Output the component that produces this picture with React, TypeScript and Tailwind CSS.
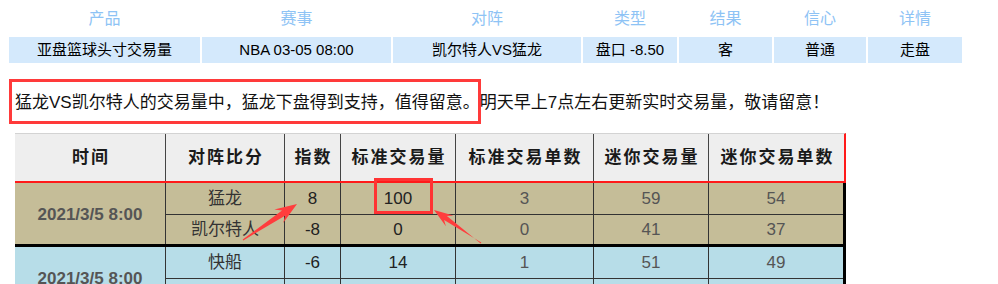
import React from 'react';

const topHeads = ['产品', '赛事', '对阵', '类型', '结果', '信心', '详情'];
const topVals = ['亚盘篮球头寸交易量', 'NBA 03-05 08:00', '凯尔特人VS猛龙', '盘口 -8.50', '客', '普通', '走盘'];

const sheetHeads = ['时间', '对阵比分', '指数', '标准交易量', '标准交易单数', '迷你交易量', '迷你交易单数'];

type Row = { name: string; idx: string; std: string; stdN: string; mini: string; miniN: string };

const groups: { time: string; bg: string; rows: Row[] }[] = [
  {
    time: '2021/3/5 8:00',
    bg: 'bg-[#c5bd98]',
    rows: [
      { name: '猛龙', idx: '8', std: '100', stdN: '3', mini: '59', miniN: '54' },
      { name: '凯尔特人', idx: '-8', std: '0', stdN: '0', mini: '41', miniN: '37' },
    ],
  },
  {
    time: '2021/3/5 8:00',
    bg: 'bg-[#b7dde8]',
    rows: [
      { name: '快船', idx: '-6', std: '14', stdN: '1', mini: '51', miniN: '49' },
      { name: '', idx: '', std: '', stdN: '', mini: '', miniN: '' },
    ],
  },
];

function DataRow({ r, h, last }: { r: Row; h: string; last: boolean }) {
  return (
    <div className={`flex ${h} ${last ? '' : 'border-b border-[#333]'}`}>
      <div className="w-[119px] border-r border-[#333] flex items-center justify-center text-[#333]">{r.name}</div>
      <div className="w-[56px] border-r border-[#333] flex items-center justify-center text-[#222]">{r.idx}</div>
      <div className="w-[115px] border-r border-[#333] flex items-center justify-center text-[#222]">{r.std}</div>
      <div className="w-[138px] border-r border-[#333] flex items-center justify-center text-[#555]">{r.stdN}</div>
      <div className="w-[115px] border-r border-[#333] flex items-center justify-center text-[#555]">{r.mini}</div>
      <div className="w-[134px] flex items-center justify-center text-[#555]">{r.miniN}</div>
    </div>
  );
}

export default function App() {
  return (
    <div className="relative w-[998px] h-[284px] overflow-hidden bg-white font-['Liberation_Sans','Noto_Sans_CJK_SC',sans-serif]">
      {/* top table */}
      <div className="ml-[9px] grid grid-cols-[191px_189px_188px_94px_93px_92px_94px] grid-rows-[37px_26px] gap-x-[2px]">
        {topHeads.map((h) => (
          <div key={h} className="flex items-center justify-center text-[16px] text-[#8ec3f5]">
            {h}
          </div>
        ))}
        {topVals.map((v) => (
          <div key={v} className="flex items-center justify-center bg-[#d4e9fc] text-[15px] text-black">
            {v}
          </div>
        ))}
      </div>

      {/* paragraph */}
      <div className="relative mt-[29px] pl-[15px] text-[17px] leading-[22px] text-[#111]">
        猛龙VS凯尔特人的交易量中，猛龙下盘得到支持，值得留意。明天早上7点左右更新实时交易量，敬请留意！
        <div className="absolute left-[9px] top-[-13px] w-[472px] h-[45px] border-[3px] border-[#ff3a3a]" />
      </div>

      {/* spreadsheet */}
      <div className="ml-[15px] mt-[19px] text-[17px]">
        <div className="flex w-[831px] h-[50px] bg-[#eeeeee] border-t border-[#d3d3d3] border-b-2 border-b-[#ff1a1a] border-r-2 border-r-[#ff1a1a] font-bold text-[#1a1a1a] tracking-[2px]">
          {sheetHeads.map((h, i) => {
            const w = ['w-[151px]', 'w-[119px]', 'w-[56px]', 'w-[115px]', 'w-[138px]', 'w-[115px]', 'w-[135px]'][i];
            return (
              <div
                key={h}
                className={`${w} ${i < 6 ? 'border-r border-[#444]' : ''} flex items-center justify-center pl-[2px]`}
              >
                {h}
              </div>
            );
          })}
        </div>
        {groups.map((g, gi) => (
          <div key={gi} className={`flex w-[831px] ${g.bg} border-b-[3px] border-b-black border-r-[3px] border-r-black`}>
            <div className="w-[151px] border-r border-[#333] flex items-center justify-center pt-[2px] font-bold text-[#555]">
              {g.time}
            </div>
            <div className="flex flex-col">
              {g.rows.map((r, ri) => (
                <DataRow
                  key={ri}
                  r={r}
                  h={ri === 0 ? 'h-[32px]' : 'h-[29px]'}
                  last={ri === g.rows.length - 1}
                />
              ))}
            </div>
          </div>
        ))}
      </div>

      {/* overlays */}
      <div className="absolute left-[374px] top-[178px] w-[59px] h-[36px] border-[3px] border-[#ff3333]" />
      <svg className="absolute inset-0 pointer-events-none" width="998" height="284" viewBox="0 0 998 284">
        <polygon
          points="243.3,240.4 285.4,215.4 283.1,222.9 297,204 274.3,209.5 282.0,210.4 242.7,239.6"
          fill="#ff3d3d"
        />
        <polygon
          points="481.3,242.6 444.1,220.1 445.9,226.2 434,210 453.3,215.6 446.9,216.1 480.7,243.4"
          fill="#ff3d3d"
        />
      </svg>
    </div>
  );
}
